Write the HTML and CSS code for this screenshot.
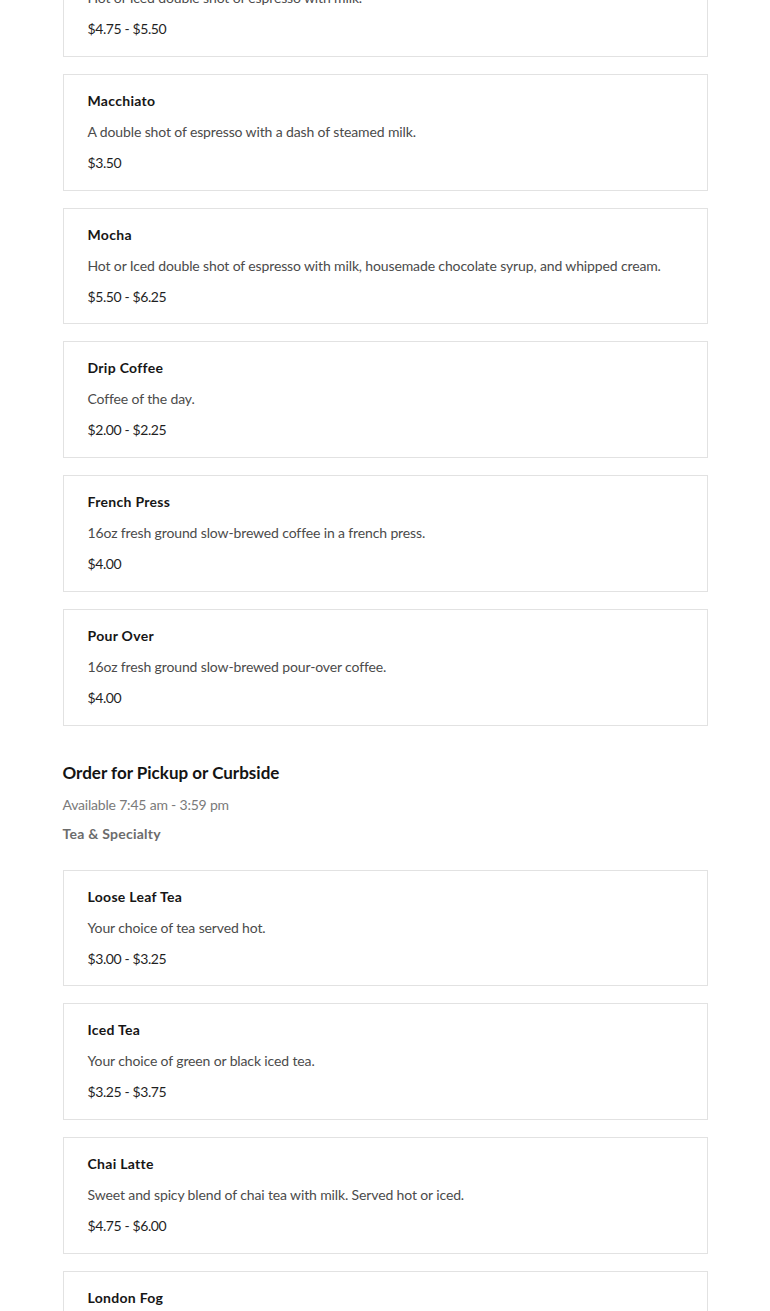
FILE: index.html
```html
<!DOCTYPE html>
<html>
<head>
<meta charset="utf-8">
<link rel="stylesheet" href="styles.css">
</head>
<body>
<main class="menu">
  <section class="items">
    <div class="card">
      <div class="title">Latte</div>
      <div class="desc">Hot or Iced double shot of espresso with milk.</div>
      <div class="price">$4.75 - $5.50</div>
    </div>
    <div class="card">
      <div class="title">Macchiato</div>
      <div class="desc">A double shot of espresso with a dash of steamed milk.</div>
      <div class="price">$3.50</div>
    </div>
    <div class="card">
      <div class="title">Mocha</div>
      <div class="desc">Hot or Iced double shot of espresso with milk, housemade chocolate syrup, and whipped cream.</div>
      <div class="price">$5.50 - $6.25</div>
    </div>
    <div class="card">
      <div class="title">Drip Coffee</div>
      <div class="desc">Coffee of the day.</div>
      <div class="price">$2.00 - $2.25</div>
    </div>
    <div class="card">
      <div class="title">French Press</div>
      <div class="desc">16oz fresh ground slow-brewed coffee in a french press.</div>
      <div class="price">$4.00</div>
    </div>
    <div class="card">
      <div class="title">Pour Over</div>
      <div class="desc">16oz fresh ground slow-brewed pour-over coffee.</div>
      <div class="price">$4.00</div>
    </div>
  </section>

  <header class="section-head">
    <h2 class="section-title">Order for Pickup or Curbside</h2>
    <div class="avail">Available 7:45 am - 3:59 pm</div>
    <div class="category">Tea &amp; Specialty</div>
  </header>

  <section class="items">
    <div class="card">
      <div class="title">Loose Leaf Tea</div>
      <div class="desc">Your choice of tea served hot.</div>
      <div class="price">$3.00 - $3.25</div>
    </div>
    <div class="card">
      <div class="title">Iced Tea</div>
      <div class="desc">Your choice of green or black iced tea.</div>
      <div class="price">$3.25 - $3.75</div>
    </div>
    <div class="card">
      <div class="title">Chai Latte</div>
      <div class="desc">Sweet and spicy blend of chai tea with milk. Served hot or iced.</div>
      <div class="price">$4.75 - $6.00</div>
    </div>
    <div class="card">
      <div class="title">London Fog</div>
      <div class="desc">Earl grey tea with vanilla syrup and steamed milk.</div>
      <div class="price">$4.75 - $5.50</div>
    </div>
  </section>
</main>
</body>
</html>
```

FILE: styles.css
```css
html, body {
  margin: 0;
  padding: 0;
  background: #ffffff;
}
body {
  font-family: Lato, "Noto Sans", Arial, sans-serif;
  color: #1b1b1b;
  overflow: hidden;
}
.menu {
  width: 645px;
  margin: -60px auto 0;
}
.items {
  display: flex;
  flex-direction: column;
  gap: 17px;
}
.card {
  border: 1px solid #e2e2e2;
  padding: 16px 24px 16px 24px;
  display: flex;
  flex-direction: column;
  gap: 11px;
}
.title {
  font-size: 14px;
  font-weight: 700;
  line-height: 20px;
  color: #161616;
  letter-spacing: 0.3px;
}
.desc {
  font-size: 14px;
  line-height: 20px;
  color: #4b4b4b;
  letter-spacing: -0.13px;
}
.price {
  font-size: 14px;
  line-height: 20.75px;
  color: #1f1f1f;
  letter-spacing: -0.4px;
}
.section-head {
  margin: 35px 0 26px;
}
.section-title {
  margin: 0;
  font-size: 17px;
  line-height: 24px;
  font-weight: 700;
  color: #141414;
}
.avail {
  margin-top: 10px;
  font-size: 14px;
  line-height: 20px;
  color: #7a7a7a;
  letter-spacing: -0.2px;
}
.category {
  margin-top: 9px;
  font-size: 14px;
  line-height: 20px;
  font-weight: 700;
  color: #6c6c6c;
  letter-spacing: 0.25px;
}
```
